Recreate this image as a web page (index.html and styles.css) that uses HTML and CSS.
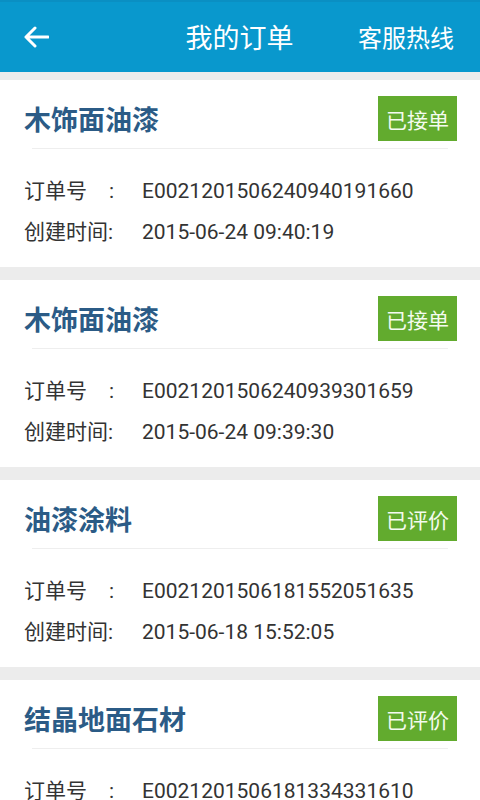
FILE: index.html
```html
<!DOCTYPE html>
<html lang="zh-CN">
<head>
<meta charset="utf-8"/>
<meta content="width=device-width, initial-scale=1.0" name="viewport"/>
<title>我的订单</title>
<link rel="stylesheet" href="styles.css">
</head>
<body>
<div class="topbar">
  <span class="back">
    <svg width="26" height="22" viewBox="0 0 26 22"><path d="M25 11H3M12 2L3 11L12 20" fill="none" stroke="#fff" stroke-width="3" stroke-linecap="round" stroke-linejoin="round"/></svg>
  </span>
  <h1 class="title">我的订单</h1>
  <span class="hotline">客服热线</span>
</div>

<div class="orders">
  <div class="order">
    <div class="order-head">
      <h2 class="order-name">木饰面油漆</h2>
      <span class="badge">已接单</span>
    </div>
    <div class="order-row"><span class="label"><span>订单号</span><span>:</span></span><span class="value">E0021201506240940191660</span></div>
    <div class="order-row"><span class="label">创建时间:</span><span class="value">2015-06-24 09:40:19</span></div>
  </div>

  <div class="order">
    <div class="order-head">
      <h2 class="order-name">木饰面油漆</h2>
      <span class="badge">已接单</span>
    </div>
    <div class="order-row"><span class="label"><span>订单号</span><span>:</span></span><span class="value">E0021201506240939301659</span></div>
    <div class="order-row"><span class="label">创建时间:</span><span class="value">2015-06-24 09:39:30</span></div>
  </div>

  <div class="order">
    <div class="order-head">
      <h2 class="order-name">油漆涂料</h2>
      <span class="badge">已评价</span>
    </div>
    <div class="order-row"><span class="label"><span>订单号</span><span>:</span></span><span class="value">E0021201506181552051635</span></div>
    <div class="order-row"><span class="label">创建时间:</span><span class="value">2015-06-18 15:52:05</span></div>
  </div>

  <div class="order">
    <div class="order-head">
      <h2 class="order-name">结晶地面石材</h2>
      <span class="badge">已评价</span>
    </div>
    <div class="order-row"><span class="label"><span>订单号</span><span>:</span></span><span class="value">E0021201506181334331610</span></div>
    <div class="order-row"><span class="label">创建时间:</span><span class="value">2015-06-18 13:34:33</span></div>
  </div>
</div>
</body>
</html>
```

FILE: styles.css
```css
body {
  margin: 0;
  background: #ececec;
  font-family: Roboto, "Noto Sans CJK SC", sans-serif;
  color: #333;
  overflow: hidden;
}

.topbar {
  height: 72px;
  background: #0998cd;
  border-top: 2px solid #0a8fc3;
  box-sizing: border-box;
  display: flex;
  align-items: center;
  padding: 0 26px 0 23px;
  color: #fff;
}
.back { width: 26px; height: 22px; display: flex; }
.title {
  flex: 1;
  margin: 0 0 2px 0;
  padding-left: 72px;
  text-align: center;
  font-size: 27px;
  font-weight: normal;
}
.hotline { font-size: 24px; margin-bottom: 2px; }

.orders {
  padding-top: 8px;
  display: flex;
  flex-direction: column;
  gap: 13px;
}

.order {
  background: #fff;
  padding: 16px 0 14px 0;
}
.order-head {
  display: flex;
  align-items: center;
  justify-content: space-between;
  padding: 0 23px 8px 24px;
  margin-bottom: 22px;
  position: relative;
}
.order-head::after {
  content: "";
  position: absolute;
  left: 32px;
  right: 32px;
  bottom: 0;
  height: 1px;
  background: #eeeeee;
}
.order-name {
  margin: 0;
  font-size: 27px;
  font-weight: bold;
  color: #2b5b86;
}
.badge {
  background: #62ab2e;
  color: #f4fbef;
  font-size: 21px;
  width: 79px;
  height: 45px;
  display: flex;
  align-items: center;
  justify-content: center;
}

.order-row {
  display: flex;
  font-size: 21px;
  line-height: 41px;
  padding-left: 24px;
  white-space: nowrap;
}
.label {
  width: 90px;
  flex-shrink: 0;
  display: flex;
  justify-content: space-between;
  margin-right: 28px;
}
```
